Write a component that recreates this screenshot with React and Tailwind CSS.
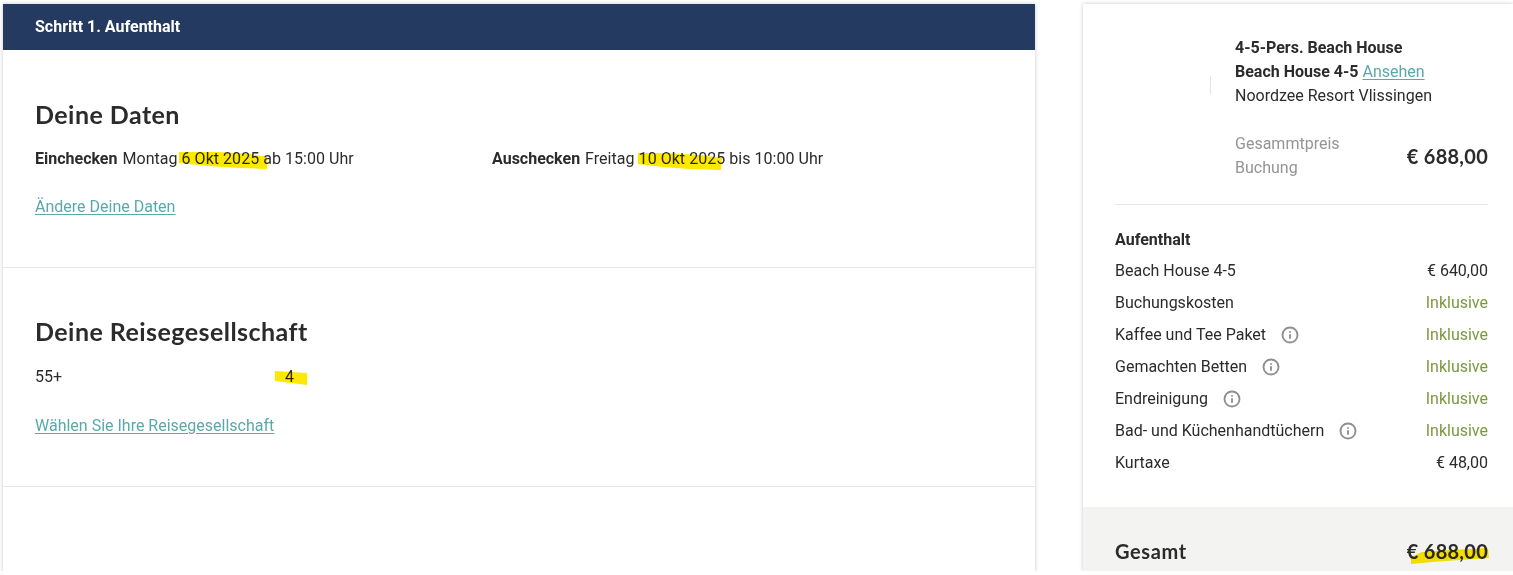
import React from 'react';
import { Info } from 'lucide-react';

const rows = [
    { label: 'Beach House 4-5', value: '€ 640,00' },
    { label: 'Buchungskosten', value: 'Inklusive', included: true },
    { label: 'Kaffee und Tee Paket', value: 'Inklusive', included: true, info: true },
    { label: 'Gemachten Betten', value: 'Inklusive', included: true, info: true },
    { label: 'Endreinigung', value: 'Inklusive', included: true, info: true },
    { label: 'Bad- und Küchenhandtüchern', value: 'Inklusive', included: true, info: true },
    { label: 'Kurtaxe', value: '€ 48,00' },
];

// hand drawn yellow marker stroke that sits over the text
function Marker({ className, width, height, d }) {
    return (
        <svg
            className={`absolute mix-blend-multiply pointer-events-none ${className}`}
            width={width}
            height={height}
            viewBox={`0 0 ${width} ${height}`}
        >
            <path d={d} fill="#fde800" />
        </svg>
    );
}

function Section({ title, children, link, topPad, linkGap }) {
    return (
        <div className={`px-8 pb-12 border-b border-[#e6e6e6] ${topPad}`}>
            <h2 className="font-['Lato'] font-bold text-[25px] leading-[30px] pb-0.5 tracking-[0.45px] text-[#2b2b2b]">{title}</h2>
            {children}
            <a className={`block text-[#5aa9aa] underline underline-offset-2 ${linkGap}`}>{link}</a>
        </div>
    );
}

export default function App() {
    return (
        <div className="h-[571px] overflow-hidden bg-white font-['Roboto'] text-[16px] leading-6 text-[#2b2b2b] pt-1 pl-[3px] flex gap-12 items-start">
            {/* Left column */}
            <div className="w-[1032px] h-[580px] shrink-0 bg-white shadow-[0_0_4px_rgba(0,0,0,0.22)]">
                <div className="h-[46px] bg-[#253a61] px-8 flex items-center text-white font-bold">Schritt 1. Aufenthalt</div>

                <Section title="Deine Daten" link="Ändere Deine Daten" topPad="pt-[49px]" linkGap="mt-6">
                    <div className="mt-4 flex">
                        <div className="relative w-[457px]">
                            <Marker
                                className="left-[143px] top-[4px]"
                                width={90}
                                height={19}
                                d="M1 1 L40 1 L72 3 L89 6 L89 18 L62 17 L30 15 L1 12 Z"
                            />
                            <strong className="font-bold mr-px">Einchecken</strong>{' '}
                            <span className="tracking-[0.04px]">Montag 6 Okt 2025 ab 15:00 Uhr</span>
                        </div>
                        <div className="relative">
                            <Marker
                                className="left-[145px] top-[4px]"
                                width={86}
                                height={20}
                                d="M1 2 L30 2 L62 4 L85 7 L84 19 L52 18 L26 16 L1 13 Z"
                            />
                            <strong className="font-bold mr-px">Auschecken</strong>{' '}
                            <span className="tracking-[0.04px]">Freitag 10 Okt 2025 bis 10:00 Uhr</span>
                        </div>
                    </div>
                </Section>

                <Section title="Deine Reisegesellschaft" link="Wählen Sie Ihre Reisegesellschaft" topPad="pt-[48px]" linkGap="mt-[25px]">
                    <div className="mt-[17px] flex relative">
                        <Marker
                            className="left-[239px] top-[5px]"
                            width={34}
                            height={16}
                            d="M1 1 L33 3 L33 15 L1 11 Z"
                        />
                        <span className="w-[250px]">55+</span>
                        <span>4</span>
                    </div>
                </Section>
            </div>

            {/* Right column */}
            <div className="flex-1 h-[567px] flex flex-col bg-white shadow-[0_0_4px_rgba(0,0,0,0.22)]">
                <div className="pl-8 pr-[25px] pt-8 flex-1">
                    <div className="flex">
                        <div className="w-[96px] shrink-0 flex justify-end items-start pt-10">
                            <div className="w-px h-[18px] bg-[#e4e4e4]" />
                        </div>
                        <div className="ml-6 flex-1">
                            <div className="font-bold">4-5-Pers. Beach House</div>
                            <div>
                                <span className="font-bold">Beach House 4-5</span>{' '}
                                <a className="text-[#5aa9aa] underline underline-offset-2">Ansehen</a>
                            </div>
                            <div>Noordzee Resort Vlissingen</div>
                            <div className="mt-6 flex items-center justify-between">
                                <div className="text-[#949494]">
                                    <div>Gesammtpreis</div>
                                    <div>Buchung</div>
                                </div>
                                <div className="font-['Lato'] font-bold text-[20px] tracking-[0.25px]">€ 688,00</div>
                            </div>
                        </div>
                    </div>

                    <div className="mt-6 border-t border-[#e6e6e6] pt-[23px]">
                        <div className="font-bold mb-[3px]">Aufenthalt</div>
                        {rows.map((row) => (
                            <div key={row.label} className="h-8 flex items-center justify-between">
                                <div className="flex items-center">
                                    {row.label}
                                    {row.info && <Info size={18} strokeWidth={2.5} className="ml-[15px] text-[#8f8f8f]" />}
                                </div>
                                <div className={row.included ? 'text-[#7a9a3f]' : ''}>{row.value}</div>
                            </div>
                        ))}
                    </div>
                </div>

                <div className="h-[64px] shrink-0 bg-[#f3f3f1] pl-8 pr-[25px] pt-[30px] flex justify-between font-['Lato'] font-bold text-[20px] leading-7">
                    <span className="tracking-[0.6px]">Gesamt</span>
                    <span className="relative tracking-[0.25px]">
                        <Marker
                            className="left-[3px] top-[10px]"
                            width={80}
                            height={18}
                            d="M1 10 L12 5 L40 3 L78 1 L79 11 L50 13 L22 15 L1 17 Z"
                        />
                        € 688,00
                    </span>
                </div>
            </div>
        </div>
    );
}
